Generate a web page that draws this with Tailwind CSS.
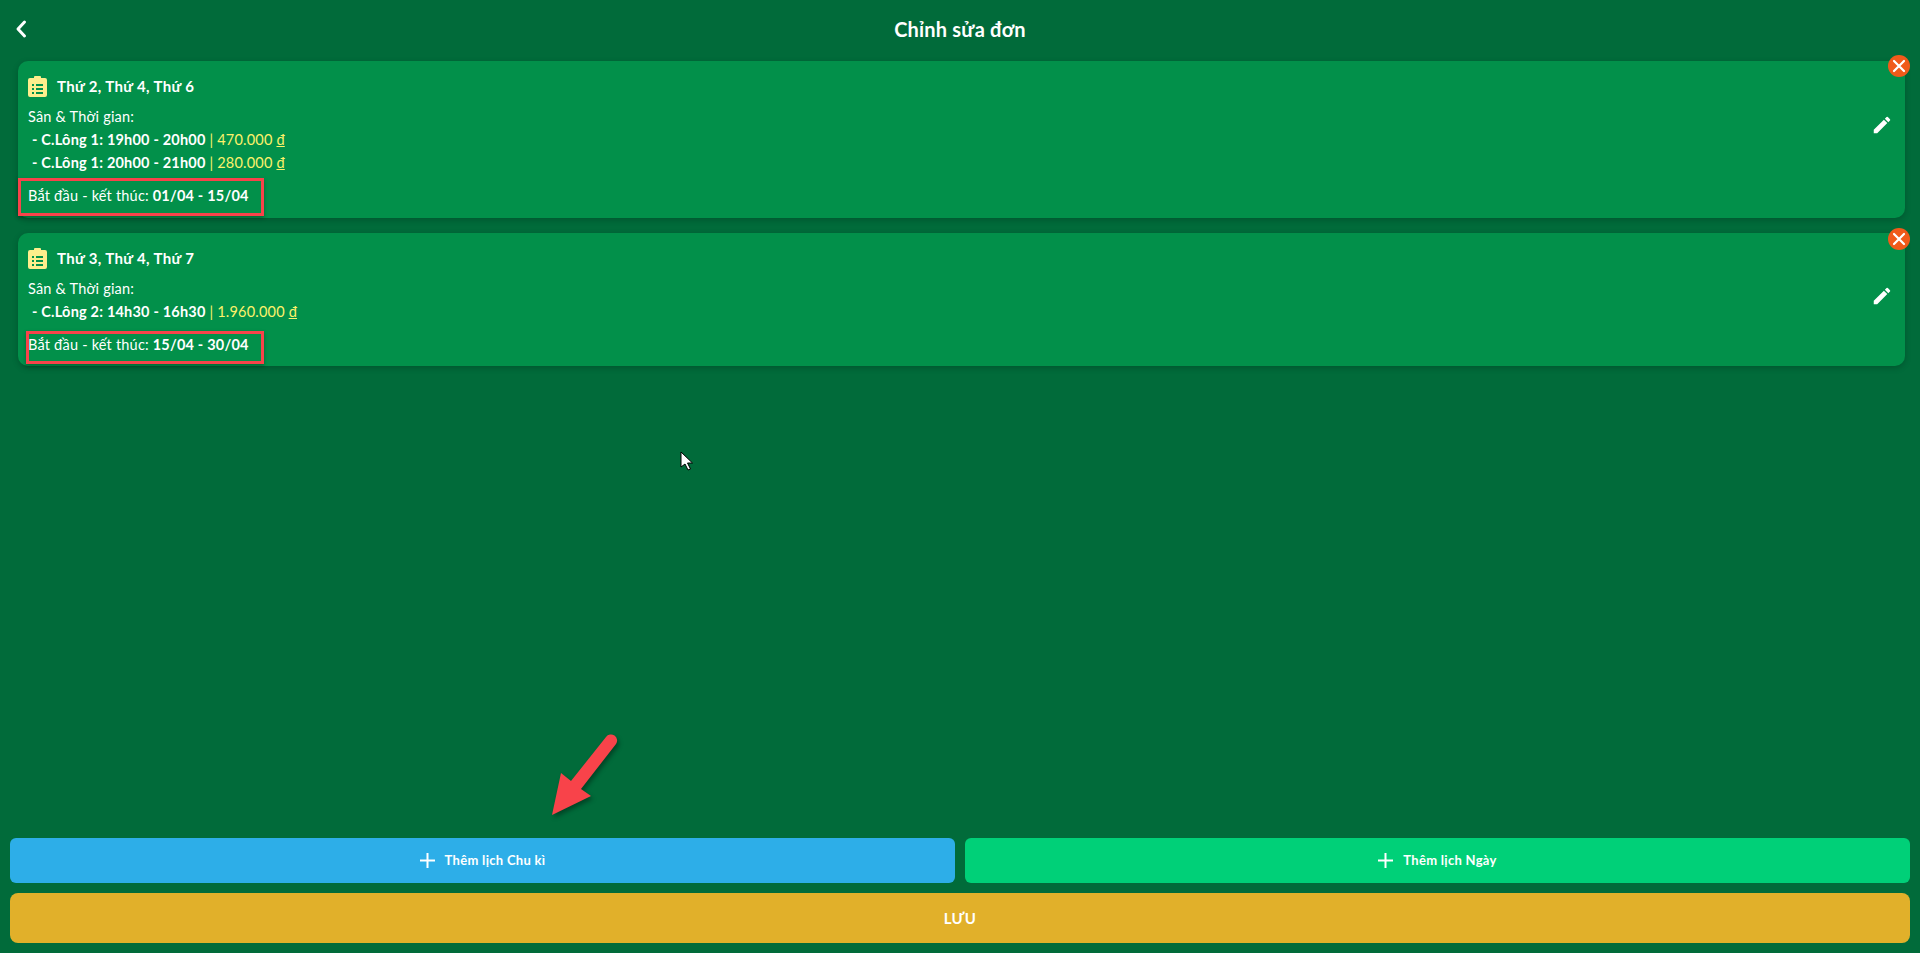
<!DOCTYPE html>
<html lang="vi"><head><meta charset="utf-8"><script src="https://cdn.jsdelivr.net/npm/@tailwindcss/browser@4"></script></head>
<body class="m-0">
<div class="relative w-[1920px] h-[953px] overflow-hidden bg-[#016b3a] text-white flex flex-col font-['Lato','Noto_Sans',sans-serif]">
  <header class="relative h-[58px] flex items-center justify-center shrink-0">
    <svg class="absolute left-[13px] top-[18px]" width="16" height="22" viewBox="0 0 16 22" fill="none" stroke="white" stroke-width="3" stroke-linecap="round" stroke-linejoin="round"><path d="M11.5 4 L5 11 L11.5 18"/></svg>
    <h1 class="text-[20px] font-bold leading-none tracking-[0.2px]">Chỉnh sửa đơn</h1>
  </header>
  <main class="flex-1 flex flex-col gap-[15px] pl-[18px] pr-[15px] pt-[3px]">
    <section class="relative bg-[#02904a] rounded-[10px] h-[157px] pl-[10px] pt-[13px] shadow-[0_2px_6px_rgba(0,0,0,0.2)]">
      <div class="flex items-center gap-[10px] h-[24px]">
        <svg width="19" height="21" viewBox="0 0 19 21" class="shrink-0"><path fill="#fdee8c" fill-rule="evenodd" d="M6 2V1a1 1 0 0 1 1-1h5a1 1 0 0 1 1 1v1h4a2 2 0 0 1 2 2v15a2 2 0 0 1-2 2H2a2 2 0 0 1-2-2V4a2 2 0 0 1 2-2zM4 8v2h2V8zm4 0v2h7V8zm-4 4v2h2v-2zm4 0v2h7v-2zm-4 4v2h2v-2zm4 0v2h7v-2z"/></svg>
        <span class="text-[15px] font-bold tracking-[0.35px]">Thứ 2, Thứ 4, Thứ 6</span>
      </div>
      <div class="mt-[7px] text-[14.5px] leading-[23px] tracking-[0.2px]">
        <p>Sân &amp; Thời gian:</p>
        <p class="pl-[4px]"><b>- C.Lông 1: 19h00 - 20h00</b> <span class="text-[#fdf26b]">| 470.000 <u>đ</u></span></p>
        <p class="pl-[4px]"><b>- C.Lông 1: 20h00 - 21h00</b> <span class="text-[#fdf26b]">| 280.000 <u>đ</u></span></p>
      </div>
      <p class="mt-[10px] text-[14.5px] leading-[23px] tracking-[0.2px]">Bắt đầu - kết thúc: <b>01/04 - 15/04</b></p>
      <svg class="absolute right-[12px] top-[53px]" width="22" height="22" viewBox="0 0 24 24" fill="white"><path d="M3 17.25V21h3.75L17.81 9.94l-3.75-3.75L3 17.25zM20.71 7.04a1 1 0 0 0 0-1.41l-2.34-2.34a1 1 0 0 0-1.41 0l-1.83 1.83 3.75 3.75 1.83-1.83z"/></svg>
      <div class="absolute right-[-5px] top-[-6px] w-[22px] h-[22px] rounded-full bg-[#f05a1a] flex items-center justify-center">
        <svg width="14" height="14" viewBox="0 0 14 14" stroke="white" stroke-width="2.2" stroke-linecap="round"><path d="M2 2 12 12M12 2 2 12"/></svg>
      </div>
    </section>
    <section class="relative bg-[#02904a] rounded-[10px] h-[133px] pl-[10px] pt-[13px] shadow-[0_2px_6px_rgba(0,0,0,0.2)]">
      <div class="flex items-center gap-[10px] h-[24px]">
        <svg width="19" height="21" viewBox="0 0 19 21" class="shrink-0"><path fill="#fdee8c" fill-rule="evenodd" d="M6 2V1a1 1 0 0 1 1-1h5a1 1 0 0 1 1 1v1h4a2 2 0 0 1 2 2v15a2 2 0 0 1-2 2H2a2 2 0 0 1-2-2V4a2 2 0 0 1 2-2zM4 8v2h2V8zm4 0v2h7V8zm-4 4v2h2v-2zm4 0v2h7v-2zm-4 4v2h2v-2zm4 0v2h7v-2z"/></svg>
        <span class="text-[15px] font-bold tracking-[0.35px]">Thứ 3, Thứ 4, Thứ 7</span>
      </div>
      <div class="mt-[7px] text-[14.5px] leading-[23px] tracking-[0.2px]">
        <p>Sân &amp; Thời gian:</p>
        <p class="pl-[4px]"><b>- C.Lông 2: 14h30 - 16h30</b> <span class="text-[#fdf26b]">| 1.960.000 <u>đ</u></span></p>
      </div>
      <p class="mt-[10px] text-[14.5px] leading-[23px] tracking-[0.2px]">Bắt đầu - kết thúc: <b>15/04 - 30/04</b></p>
      <svg class="absolute right-[12px] top-[52px]" width="22" height="22" viewBox="0 0 24 24" fill="white"><path d="M3 17.25V21h3.75L17.81 9.94l-3.75-3.75L3 17.25zM20.71 7.04a1 1 0 0 0 0-1.41l-2.34-2.34a1 1 0 0 0-1.41 0l-1.83 1.83 3.75 3.75 1.83-1.83z"/></svg>
      <div class="absolute right-[-5px] top-[-5px] w-[22px] h-[22px] rounded-full bg-[#f05a1a] flex items-center justify-center">
        <svg width="14" height="14" viewBox="0 0 14 14" stroke="white" stroke-width="2.2" stroke-linecap="round"><path d="M2 2 12 12M12 2 2 12"/></svg>
      </div>
    </section>
  </main>
  <footer class="shrink-0 flex flex-col gap-[10px] px-[10px] pb-[10px]">
    <div class="flex gap-[10px]">
      <button class="flex-1 h-[45px] rounded-[6px] bg-[#2daee8] flex items-center justify-center gap-[10px] text-[13px] font-bold tracking-[0.3px]">
        <svg width="15" height="15" viewBox="0 0 15 15" stroke="white" stroke-width="2"><path d="M7.5 0v15M0 7.5h15"/></svg>Thêm lịch Chu kì</button>
      <button class="flex-1 h-[45px] rounded-[6px] bg-[#00d078] flex items-center justify-center gap-[10px] text-[13px] font-bold tracking-[0.3px]">
        <svg width="15" height="15" viewBox="0 0 15 15" stroke="white" stroke-width="2"><path d="M7.5 0v15M0 7.5h15"/></svg>Thêm lịch Ngày</button>
    </div>
    <button class="h-[50px] rounded-[8px] bg-[#e1b02a] text-[15px] font-bold tracking-[0.3px]">LƯU</button>
  </footer>

  <div class="absolute left-[18px] top-[178px] w-[246px] h-[38px] border-[3px] border-[#f8434a] shadow-[0_2px_4px_rgba(0,0,0,0.3)]"></div>
  <div class="absolute left-[26px] top-[331px] w-[238px] h-[33px] border-[3px] border-[#f8434a] shadow-[0_2px_4px_rgba(0,0,0,0.3)]"></div>
  <svg class="absolute left-[540px] top-[725px] drop-shadow-[2px_3px_2px_rgba(0,0,0,0.35)]" width="80" height="95" viewBox="540 725 80 95"><path fill="#f8434a" d="M552 815 561 773 571 781 606 737a6 6 0 0 1 10 7L581 789 591 796z"/></svg>
  <svg class="absolute left-[680px] top-[451px]" width="14" height="20" viewBox="0 0 14 20"><path fill="white" stroke="black" stroke-width="1" d="M1 1v15l4-3 3 6 2.500-1-3-6h5z"/></svg>
</div>
</body></html>
